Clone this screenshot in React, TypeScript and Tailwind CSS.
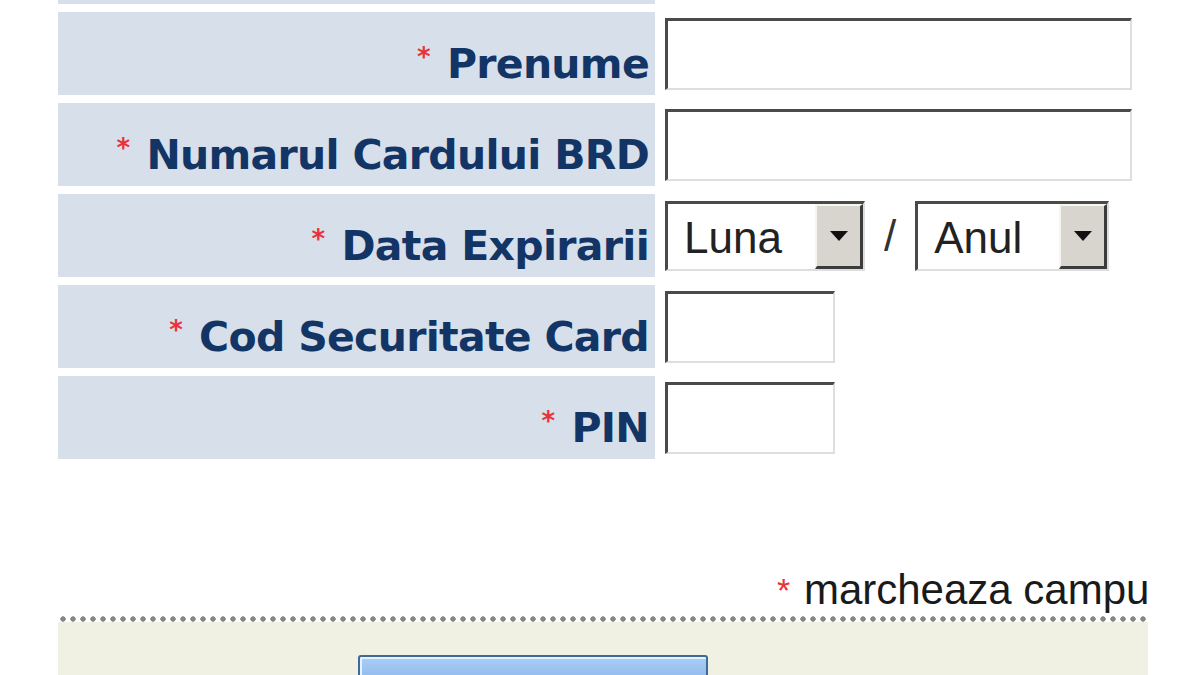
import { FC } from "react";

type Field = "wide" | "short" | "date";

const rows: { label: string; field: Field }[] = [
  { label: "Prenume", field: "wide" },
  { label: "Numarul Cardului BRD", field: "wide" },
  { label: "Data Expirarii", field: "date" },
  { label: "Cod Securitate Card", field: "short" },
  { label: "PIN", field: "short" },
];

// bordura "inset" clasica din formularele vechi
const inset =
  "border-t-[3px] border-l-[3px] border-r-2 border-b-2 border-t-[#4a4a4a] border-l-[#4a4a4a] border-r-[#dedede] border-b-[#dedede] bg-white";

const Select: FC<{ text: string; className: string }> = ({ text, className }) => (
  <div className={`${inset} ${className} flex h-[70px]`}>
    <div className="flex flex-1 items-center pt-[4px] pl-[16px] font-['Liberation_Sans',sans-serif] text-[44px] leading-none text-[#222]">
      {text}
    </div>
    <div className="flex w-[48px] items-center justify-center border-t-2 border-l-2 border-r-[3px] border-b-[3px] border-t-[#f6f5f1] border-l-[#f6f5f1] border-r-[#3c3c3c] border-b-[#3c3c3c] bg-[#d8d5ce]">
      <svg width="18" height="10" viewBox="0 0 18 10">
        <path d="M0 0H18L9 10Z" fill="#111" />
      </svg>
    </div>
  </div>
);

const Input: FC<{ field: Field }> = ({ field }) => {
  if (field === "date") {
    return (
      <div className="flex items-center">
        <Select text="Luna" className="w-[200px]" />
        <span className="mx-[19px] font-['Liberation_Sans',sans-serif] text-[44px] leading-none text-[#333]">/</span>
        <Select text="Anul" className="w-[194px]" />
      </div>
    );
  }
  return <div className={`${inset} h-[72px] ${field === "wide" ? "w-[467px]" : "w-[170px]"}`} />;
};

const App: FC = () => {
  return (
    <div className="h-[675px] w-[1200px] overflow-hidden bg-white">
      <div className="ml-[58px] w-[1090px] overflow-hidden">
        {/* capatul randului anterior */}
        <div className="h-[4px] w-[597px] bg-[#d6dfea]" />

        {rows.map((row) => (
          <div key={row.label} className="mt-[8px] flex h-[83px]">
            <div className="flex w-[597px] items-end justify-end bg-[#d6dfea] pr-[6px] pb-[10px]">
              <div className="whitespace-nowrap font-['DejaVu_Sans',sans-serif] text-[41px] font-bold leading-none tracking-[-0.7px] text-[#123566]">
                <span className="mr-[17px] align-[12px] text-[26px] text-[#e8333b]">*</span>
                {row.label}
              </div>
            </div>
            <div className="flex items-center pl-[10px]">
              <Input field={row.field} />
            </div>
          </div>
        ))}

        <div className="flex h-[157px] items-end pb-[5px] pl-[719px]">
          <div className="whitespace-nowrap font-['Liberation_Sans',sans-serif] text-[42px] leading-none text-[#1a1a1a]">
            <span className="mr-[2px] align-[2px] text-[34px] text-[#e8333b]">*</span> marcheaza campurile obligatorii
          </div>
        </div>

        <div className="h-[6px] bg-[radial-gradient(circle,#868686_2.4px,transparent_3px)] bg-[length:10px_6px]" />
        <div className="h-[120px] bg-[#f0f0e3] pt-[33px] pl-[300px]">
          <button className="h-[60px] w-[350px] rounded-[3px] border-2 border-[#3f6996] bg-gradient-to-b from-[#a9cdf6] to-[#6aa0df] shadow-[inset_2px_2px_0_#e6f2ff]" />
        </div>
      </div>
    </div>
  );
};

export default App;
